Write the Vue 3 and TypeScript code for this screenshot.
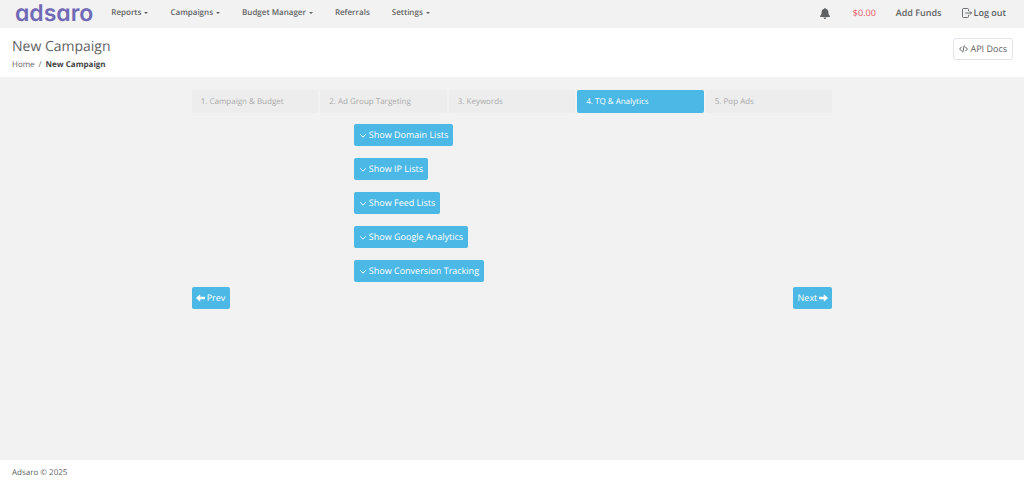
<script setup lang="ts">
import { ref } from 'vue'

interface MenuItem {
  label: string
  dropdown: boolean
}

const menu: MenuItem[] = [
  { label: 'Reports', dropdown: true },
  { label: 'Campaigns', dropdown: true },
  { label: 'Budget Manager', dropdown: true },
  { label: 'Referrals', dropdown: false },
  { label: 'Settings', dropdown: true },
]

const steps: string[] = [
  'Campaign & Budget',
  'Ad Group Targeting',
  'Keywords',
  'TQ & Analytics',
  'Pop Ads',
]
const current = ref(3)

const sections: string[] = [
  'Domain Lists',
  'IP Lists',
  'Feed Lists',
  'Google Analytics',
  'Conversion Tracking',
]

function go(delta: number): void {
  current.value = Math.min(steps.length - 1, Math.max(0, current.value + delta))
}
</script>

<template>
  <div class="page">
    <header class="topbar">
      <a class="logo" href="#">adsaro</a>
      <nav class="menu">
        <a v-for="item in menu" :key="item.label" class="menu-link" href="#">
          {{ item.label }}<span v-if="item.dropdown" class="caret"></span>
        </a>
      </nav>
      <div class="account">
        <button class="bell" type="button" aria-label="Notifications">
          <svg width="10" height="11" viewBox="0 0 10 11">
            <path fill="currentColor" d="M5 0c.5 0 .8.3.8.8C7.500 1.200 8.400 2.500 8.400 4.200c0 2 .6 2.900 1.400 3.600.4.500.1 1.100-.5 1.100H.7C.1 8.900-.2 8.300.2 7.800 1 7.100 1.600 6.200 1.600 4.200c0-1.700.9-3 2.600-3.400C4.200.3 4.500 0 5 0zM3.600 9.500h2.800C6.400 10.400 5.800 11 5 11s-1.400-.6-1.400-1.500z" />
          </svg>
        </button>
        <a class="balance" href="#">$0.00</a>
        <a class="account-link funds" href="#">Add Funds</a>
        <a class="account-link" href="#">
          <svg width="10" height="10" viewBox="0 0 10 10" fill="none" stroke="currentColor" stroke-width="0.9" stroke-linecap="round" stroke-linejoin="round">
            <path d="M6.500 2.800V1.500a1 1 0 0 0-1-1h-4a1 1 0 0 0-1 1v7a1 1 0 0 0 1 1h4a1 1 0 0 0 1-1V7.200M3.500 5h6M8 3.500 9.500 5 8 6.500" />
          </svg>
          Log out
        </a>
      </div>
    </header>

    <section class="heading">
      <div>
        <h1>New Campaign</h1>
        <nav class="crumbs" aria-label="Breadcrumb">
          <a href="#">Home</a><span class="slash">/</span><strong>New Campaign</strong>
        </nav>
      </div>
      <a class="docs" href="#">
        <svg width="9" height="8" viewBox="0 0 9 8" fill="none" stroke="currentColor" stroke-width="1" stroke-linecap="round" stroke-linejoin="round">
          <path d="M2.500 2 .6 4l1.900 2M6.500 2l1.900 2-1.900 2M5.200.8 3.800 7.200" />
        </svg>
        API Docs
      </a>
    </section>

    <main class="content">
      <div class="wizard">
        <ol class="steps">
          <li v-for="(step, i) in steps" :key="step">
            <button
              type="button"
              class="step"
              :class="{ active: i === current }"
              :disabled="i > current"
              @click="current = i"
            >{{ i + 1 }}. {{ step }}</button>
          </li>
        </ol>
        <div class="sections">
          <button v-for="name in sections" :key="name" type="button" class="btn">
            <svg class="chevron" width="6" height="4" viewBox="0 0 6 4" fill="none" stroke="currentColor" stroke-width="1" stroke-linecap="round" stroke-linejoin="round">
              <path d="M.5.600 3 3.200 5.500.6" />
            </svg>
            Show {{ name }}
          </button>
        </div>
        <div class="pager">
          <button type="button" class="btn prev" @click="go(-1)">
            <svg width="9" height="8" viewBox="0 0 9 8">
              <path fill="currentColor" d="M0 4 4.200.3v2.400H9v2.600H4.200v2.400z" />
            </svg>
            Prev
          </button>
          <button type="button" class="btn next" @click="go(1)">
            Next
            <svg width="9" height="8" viewBox="0 0 9 8">
              <path fill="currentColor" d="M9 4 4.800.3v2.400H0v2.600h4.800v2.400z" />
            </svg>
          </button>
        </div>
      </div>
    </main>

    <footer class="footer">Adsaro © 2025</footer>
  </div>
</template>

<style>
body {
  margin: 0;
  background: #f2f2f2;
}
</style>

<style scoped>
.page {
  display: flex;
  flex-direction: column;
  min-height: 100vh;
  font-family: "Open Sans", "Liberation Sans", sans-serif;
  font-size: 9px;
  line-height: 12px;
  text-rendering: geometricPrecision;
  color: #5f6264;
  background: #f2f2f2;
}

a {
  color: inherit;
  text-decoration: none;
}

button {
  font: inherit;
  text-rendering: inherit;
  margin: 0;
  border: 0;
  cursor: pointer;
}

svg {
  flex: none;
}

.topbar {
  display: flex;
  align-items: center;
  box-sizing: border-box;
  height: 28px;
  padding: 0 18px 2px 15px;
}

.logo {
  font-family: Inter, "Open Sans", sans-serif;
  font-size: 23px;
  line-height: 26px;
  font-weight: 600;
  font-feature-settings: "cv11";
  color: #7169b6;
}

.menu {
  display: flex;
  gap: 22px;
  margin-left: 18px;
  font-size: 8px;
  font-weight: 600;
}

.menu-link {
  display: flex;
  align-items: center;
}

.caret {
  margin-left: 3px;
  border: 2px solid transparent;
  border-top-color: currentColor;
  border-bottom: 0;
}

.account {
  display: flex;
  align-items: center;
  margin-left: auto;
  font-weight: 600;
}

.bell {
  display: flex;
  padding: 0;
  margin-right: 23px;
  color: inherit;
  background: none;
}

.balance {
  margin-right: 20px;
  font-weight: 400;
  color: #ed5565;
}

.account-link {
  display: flex;
  align-items: center;
  gap: 2px;
}

.funds {
  margin-right: 20px;
}

.heading {
  display: flex;
  justify-content: space-between;
  align-items: flex-start;
  padding: 10px 11px 6px 12px;
  background: #fff;
}

h1 {
  margin: 0 0 3px;
  font-size: 14px;
  line-height: 18px;
  font-weight: 400;
}

.crumbs {
  font-size: 8px;
}

.crumbs strong {
  color: #3f4143;
}

.slash {
  margin: 0 4px;
}

.docs {
  display: flex;
  align-items: center;
  gap: 2px;
  padding: 4px 5px;
  border: 1px solid #e1e5e9;
  border-radius: 3px;
}

.content {
  flex: 1;
  padding: 13px 12px;
}

.wizard {
  box-sizing: border-box;
  width: 66.667%;
  margin: 0 auto;
  padding: 0 13px;
}

.steps {
  display: grid;
  grid-template-columns: repeat(5, 1fr);
  gap: 2px;
  margin: 0;
  padding: 0;
  list-style: none;
}

.step {
  display: block;
  width: 100%;
  padding: 6px 9px 5px;
  border-radius: 2px;
  font-size: 8px;
  text-align: left;
  color: #aaa;
  background: #ededed;
}

.step.active {
  color: #fff;
  background: #4bb8e6;
}

.sections {
  display: flex;
  flex-direction: column;
  align-items: flex-start;
  gap: 12px;
  margin: 11px 0 5px;
  padding-left: calc(25% + 2px);
}

.btn {
  display: flex;
  align-items: center;
  padding: 5px;
  border-radius: 2px;
  color: #fff;
  background: #4bb8e6;
}

.chevron {
  margin: 1px 3px 0 1px;
}

.pager {
  display: flex;
  justify-content: space-between;
}

.prev,
.next {
  gap: 2px;
}

.prev {
  padding-left: 4px;
}

.next {
  padding-right: 4px;
}

.footer {
  padding: 7px 12px 2px;
  font-size: 8px;
  background: #fff;
}
</style>
